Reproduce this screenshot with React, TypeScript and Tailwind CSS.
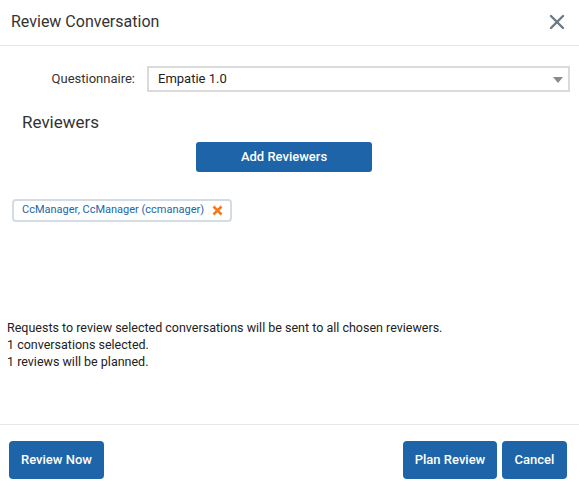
import { X } from 'lucide-react';

const font = { fontFamily: 'Roboto, "Liberation Sans", sans-serif' };

export default function App() {
  return (
    <div style={font} className="w-[579px] h-[491px] bg-white flex flex-col text-[#333]">
      {/* header */}
      <div className="h-[46px] flex items-center justify-between pl-[11px] pr-[10px] border-b border-[#e6e6e6] shrink-0">
        <h1 className="text-[16px] font-normal leading-5 text-[#333] pb-[2px]">Review Conversation</h1>
        <button className="text-[#6b7a83] mb-[2px]">
          <X size={24} strokeWidth={2.4} />
        </button>
      </div>

      {/* body */}
      <div className="flex-1 flex flex-col">
        <div className="flex items-center mt-[20px]">
          <label className="w-[136px] text-right text-[13px] text-[#333] pr-[1px]">Questionnaire:</label>
          <div className="ml-[11px] w-[423px] h-[26px] border-2 border-[#dadada] flex items-center justify-between pl-[9px] pr-[5px]">
            <span className="text-[13px] text-[#222]">Empatie 1.0</span>
            <svg width="10" height="6" viewBox="0 0 10 6" className="mt-[1px]">
              <path d="M0 0 L10 0 L5 6 Z" fill="#8a8a8a" />
            </svg>
          </div>
        </div>

        <h2 className="ml-[22px] mt-[20px] text-[17px] font-normal leading-5 text-[#333]">Reviewers</h2>

        <button className="ml-[196px] mt-[10px] w-[176px] h-[30px] rounded-[3px] bg-[#1d65a8] text-white text-[13px] font-medium">
          Add Reviewers
        </button>

        <div className="mt-[27px] ml-[12px] w-fit h-[23px] border-2 border-[#d3dbe3] rounded-[4px] flex items-center pl-[8px] pr-[7px] gap-[8px]">
          <span className="text-[11px] text-[#2166a9]">CcManager, CcManager (ccmanager)</span>
          <svg width="11" height="11" viewBox="0 0 11 11">
            <path d="M1.5 1.5 L9.5 9.5 M9.5 1.5 L1.5 9.5" stroke="#f07b23" strokeWidth="2.6" strokeLinecap="butt" />
          </svg>
        </div>

        <div className="mt-[97px] ml-[7px] text-[12.5px] leading-[17px] text-[#222]">
          <p>Requests to review selected conversations will be sent to all chosen reviewers.</p>
          <p>1 conversations selected.</p>
          <p>1 reviews will be planned.</p>
        </div>
      </div>

      {/* footer */}
      <div className="h-[67px] border-t border-[#e6e6e6] shrink-0 flex items-start justify-between pt-[16px] pl-[9px] pr-[12px]">
        <button className="w-[95px] h-[38px] rounded-[4px] bg-[#1d65a8] text-white text-[13px] font-medium">Review Now</button>
        <div className="flex gap-[5px]">
          <button className="w-[94px] h-[38px] rounded-[4px] bg-[#1d65a8] text-white text-[13px] font-medium">Plan Review</button>
          <button className="w-[65px] h-[38px] rounded-[4px] bg-[#1d65a8] text-white text-[13px] font-medium">Cancel</button>
        </div>
      </div>
    </div>
  );
}
